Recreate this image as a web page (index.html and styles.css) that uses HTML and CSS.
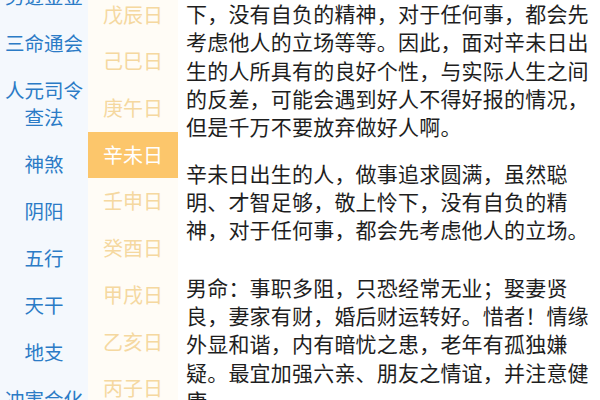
FILE: index.html
```html
<!DOCTYPE html>
<html lang="zh-CN">
<head>
<meta charset="utf-8">
<link rel="stylesheet" href="styles.css">
</head>
<body>
<div class="page">
  <nav class="cats">
    <div class="cat">男逊金金</div>
    <div class="cat">三命通会</div>
    <div class="cat">人元司令<br>查法</div>
    <div class="cat">神煞</div>
    <div class="cat">阴阳</div>
    <div class="cat">五行</div>
    <div class="cat">天干</div>
    <div class="cat">地支</div>
    <div class="cat">冲害合化</div>
  </nav>
  <nav class="days">
    <div class="day">戊辰日</div>
    <div class="day">己巳日</div>
    <div class="day">庚午日</div>
    <div class="day active">辛未日</div>
    <div class="day">壬申日</div>
    <div class="day">癸酉日</div>
    <div class="day">甲戌日</div>
    <div class="day">乙亥日</div>
    <div class="day">丙子日</div>
  </nav>
  <main class="content">
    <p class="p1">下，没有自负的精神，对于任何事，都会先考虑他人的立场等等。因此，面对辛未日出生的人所具有的良好个性，与实际人生之间的反差，可能会遇到好人不得好报的情况，但是千万不要放弃做好人啊。</p>
    <p class="p2">辛未日出生的人，做事追求圆满，虽然聪明、才智足够，敬上怜下，没有自负的精神，对于任何事，都会先考虑他人的立场。</p>
    <p class="p3">男命：事职多阻，只恐经常无业；娶妻贤良，妻家有财，婚后财运转好。惜者！情缘外显和谐，内有暗忧之患，老年有孤独嫌疑。最宜加强六亲、朋友之情谊，并注意健康。</p>
  </main>
</div>
</body>
</html>
```
FILE: styles.css
```css
html, body {
  margin: 0;
  padding: 0;
  background: #ffffff;
}
body {
  width: 600px;
  height: 400px;
  overflow: hidden;
  font-family: "Noto Sans CJK SC", "Noto Sans", sans-serif;
}
.page {
  display: flex;
  width: 600px;
  height: 400px;
  overflow: hidden;
}
.cats {
  width: 88px;
  flex: none;
  background: #f4f8fd;
  display: flex;
  flex-direction: column;
  margin-top: -28.5px;
}
.cat {
  padding: 10px 0;
  line-height: 27px;
  font-size: 19.5px;
  color: #2b7bc6;
  text-align: center;
  white-space: nowrap;
  overflow: visible;
}
.days {
  width: 90px;
  flex: none;
  background: #fffcf6;
  display: flex;
  flex-direction: column;
  margin-top: -8.3px;
}
.day {
  height: 46.7px;
  line-height: 46.7px;
  font-size: 20px;
  color: #f5d8a0;
  text-align: center;
  flex: none;
}
.day.active {
  background: #fcc66b;
  color: #ffffff;
}
.content {
  flex: 1;
  padding: 0 0 0 8px;
  margin-top: -1px;
  color: #1e1e1e;
  font-size: 21px;
  letter-spacing: 0.2px;
  line-height: 28.3px;
}
.content p {
  margin: 0;
  width: 410px;
}
.p2 {
  margin-top: 18.3px !important;
}
.p3 {
  margin-top: 29px !important;
}
```
